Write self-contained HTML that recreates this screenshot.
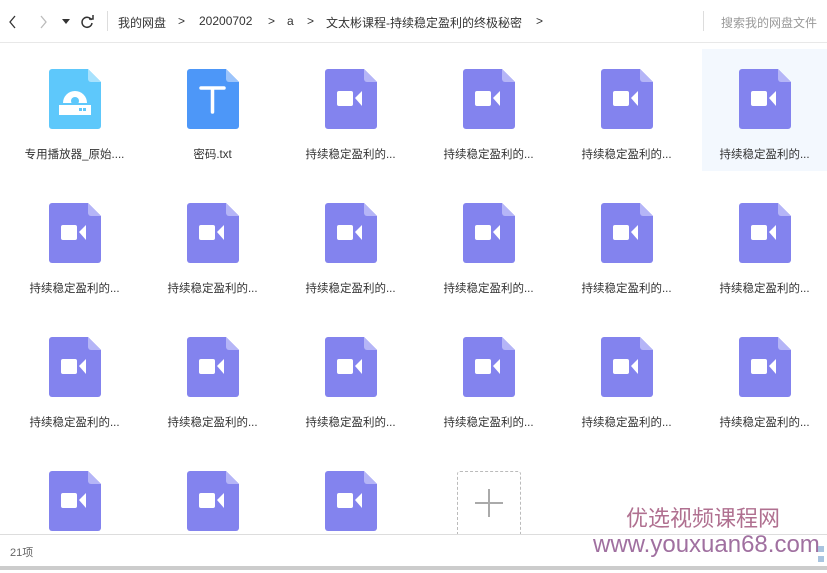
<!DOCTYPE html><html><head><meta charset="utf-8"><style>
body{margin:0;width:827px;height:570px;overflow:hidden;background:#fff;font-family:"Liberation Sans","Noto Sans CJK SC",sans-serif;position:relative}
.tb{position:absolute;left:0;top:0;width:827px;height:42px;border-bottom:1px solid #e8e8e8;font-size:12px;color:#333}
.tb span{position:absolute;top:14px}
.it{position:absolute;width:125px;height:122px;text-align:center}
.it .ic{position:absolute;left:37px;top:20px;width:52px;height:60px}
.it .lb{position:absolute;top:97px;left:0;width:125px;font-size:11.5px;color:#333}
.foot{position:absolute;left:0;top:534px;width:827px;height:36px;background:#fff;border-top:1px solid #ddd}
</style></head><body>
<div class="tb">
<svg style="position:absolute;left:8px;top:15px" width="10" height="14"><path d="M7 1L2 7l5 6" stroke="#333" fill="none" stroke-width="1.3"/></svg>
<svg style="position:absolute;left:38px;top:15px" width="10" height="14"><path d="M3 1l5 6-5 6" stroke="#bbb" fill="none" stroke-width="1.3"/></svg>
<svg style="position:absolute;left:62px;top:19px" width="8" height="6"><path d="M0 0h8L4 5z" fill="#333"/></svg>
<svg style="position:absolute;left:80px;top:15px" width="14" height="14"><path d="M11.5 5A5 5 0 1 0 12 8" stroke="#333" fill="none" stroke-width="1.5"/><path d="M9 4h4V0" stroke="#333" fill="none" stroke-width="1.5"/></svg>
<div style="position:absolute;left:107px;top:11px;width:1px;height:20px;background:#ddd"></div>
<span style="left:118px">我的网盘</span><span style="left:178px">&gt;</span><span style="left:199px">20200702</span><span style="left:268px">&gt;</span><span style="left:287px">a</span><span style="left:307px">&gt;</span><span style="left:326px">文太彬课程-持续稳定盈利的终极秘密</span><span style="left:536px">&gt;</span>
<div style="position:absolute;left:703px;top:11px;width:1px;height:20px;background:#ddd"></div>
<span style="left:721px;color:#999">搜索我的网盘文件</span>
</div>
<div style="position:absolute;left:702px;top:49px;width:125px;height:122px;background:#f3f8fe"></div>
<div id="g"></div>
<div style="position:absolute;left:457px;top:471px;width:62px;height:70px;border:1px dashed #bbb;border-radius:3px"></div>
<div style="position:absolute;left:475px;top:502px;width:28px;height:1.5px;background:#aaa"></div>
<div style="position:absolute;left:488px;top:489px;width:1.5px;height:28px;background:#aaa"></div>
<div style="position:absolute;left:626px;top:501px;font-size:22px;color:#b07090">优选视频课程网</div>
<div class="foot"><span style="position:absolute;left:10px;top:9px;font-size:11px;color:#666">21项</span></div>
<div style="position:absolute;left:593px;top:531px;font-size:24px;color:#a070a0">www.youxuan68.com</div>
<div style="position:absolute;left:0;top:566px;width:827px;height:4px;background:#ccc"></div>
<div style="position:absolute;left:818px;top:546px;width:6px;height:6px;background:#a8c4e0"></div>
<div style="position:absolute;left:818px;top:556px;width:6px;height:6px;background:#a8c4e0"></div>
<script>
var vid='<svg class="ic" viewBox="0 0 52 60"><path d="M3 0h36l13 13v44a3 3 0 0 1-3 3H3a3 3 0 0 1-3-3V3a3 3 0 0 1 3-3z" fill="#8383ee"/><path d="M39 0l13 13H42a3 3 0 0 1-3-3z" fill="#b5b5f7"/><rect x="12" y="22" width="16" height="15" rx="2" fill="#fff"/><path d="M30 29l7-7v15z" fill="#fff"/></svg>';
var pl='<svg class="ic" viewBox="0 0 52 60"><path d="M3 0h36l13 13v44a3 3 0 0 1-3 3H3a3 3 0 0 1-3-3V3a3 3 0 0 1 3-3z" fill="#5ec8fb"/><path d="M39 0l13 13H42a3 3 0 0 1-3-3z" fill="#a8e2fd"/><path d="M14 34a12 12 0 0 1 24 0z" fill="#fff"/><circle cx="26" cy="32" r="4" fill="#5ec8fb"/><rect x="10" y="36" width="32" height="10" fill="#fff"/><rect x="30" y="39" width="3" height="3" fill="#5ec8fb"/><rect x="34" y="39" width="3" height="3" fill="#5ec8fb"/></svg>';
var tx='<svg class="ic" viewBox="0 0 52 60"><path d="M3 0h36l13 13v44a3 3 0 0 1-3 3H3a3 3 0 0 1-3-3V3a3 3 0 0 1 3-3z" fill="#4d97f8"/><path d="M39 0l13 13H42a3 3 0 0 1-3-3z" fill="#9cc4fb"/><path d="M14 19h23M25.5 19v24" stroke="#fff" stroke-width="3.5" stroke-linecap="round"/></svg>';
var h='';for(var r=0;r<4;r++)for(var c=0;c<6;c++){var n=r*6+c;if(n>20)break;var ic=vid,lb='持续稳定盈利的...';if(n==0){ic=pl;lb='专用播放器_原始....'}if(n==1){ic=tx;lb='密码.txt'}
h+='<div class="it" style="left:'+(12+c*138)+'px;top:'+(49+r*134)+'px">'+ic+'<div class="lb">'+lb+'</div></div>';}
document.getElementById('g').innerHTML=h;
</script>
</body></html>
